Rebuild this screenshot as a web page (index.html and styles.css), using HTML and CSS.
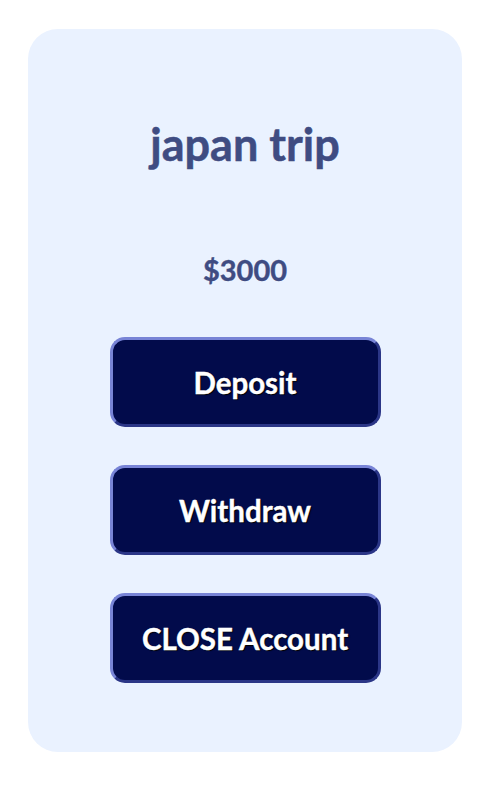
FILE: index.html
```html
<!DOCTYPE html>
<html>
<head>
<meta charset="utf-8">
<link rel="stylesheet" href="styles.css">
</head>
<body>
<div class="card">
  <h1 class="title">japan trip</h1>
  <div class="amount">$3000</div>
  <div class="actions">
    <button class="btn">Deposit</button>
    <button class="btn">Withdraw</button>
    <button class="btn">CLOSE Account</button>
  </div>
</div>
</body>
</html>
```
FILE: styles.css
```css
html, body {
  margin: 0;
  padding: 0;
  background: #ffffff;
}
body {
  padding: 29px 30px 34px 28px;
  font-family: Lato, "Noto Sans", sans-serif;
}
.card {
  box-sizing: border-box;
  width: 434px;
  height: 723px;
  background: #eaf2ff;
  border-radius: 30px;
  display: flex;
  flex-direction: column;
  align-items: center;
  padding-top: 88px;
}
.title {
  margin: 0;
  font-size: 45px;
  line-height: 54px;
  font-weight: 700;
  color: #3f4c82;
  -webkit-text-stroke: 0.5px #3f4c82;
}
.amount {
  margin-top: 82px;
  font-size: 29px;
  line-height: 34px;
  font-weight: 700;
  color: #3f4c82;
  -webkit-text-stroke: 0.4px #3f4c82;
}
.actions {
  margin-top: 50px;
  display: flex;
  flex-direction: column;
  gap: 38px;
}
.btn {
  box-sizing: border-box;
  width: 271px;
  height: 90px;
  border-radius: 15px;
  border: 3px solid;
  border-color: #7884d6 #2b3687 #2b3687 #7884d6;
  background: #020b4b;
  color: #ffffff;
  font-family: Lato, "Noto Sans", sans-serif;
  font-weight: 700;
  font-size: 29.5px;
  -webkit-text-stroke: 0.4px #ffffff;
  text-shadow: 1px 1px 1px #000;
  padding: 0;
}
```
